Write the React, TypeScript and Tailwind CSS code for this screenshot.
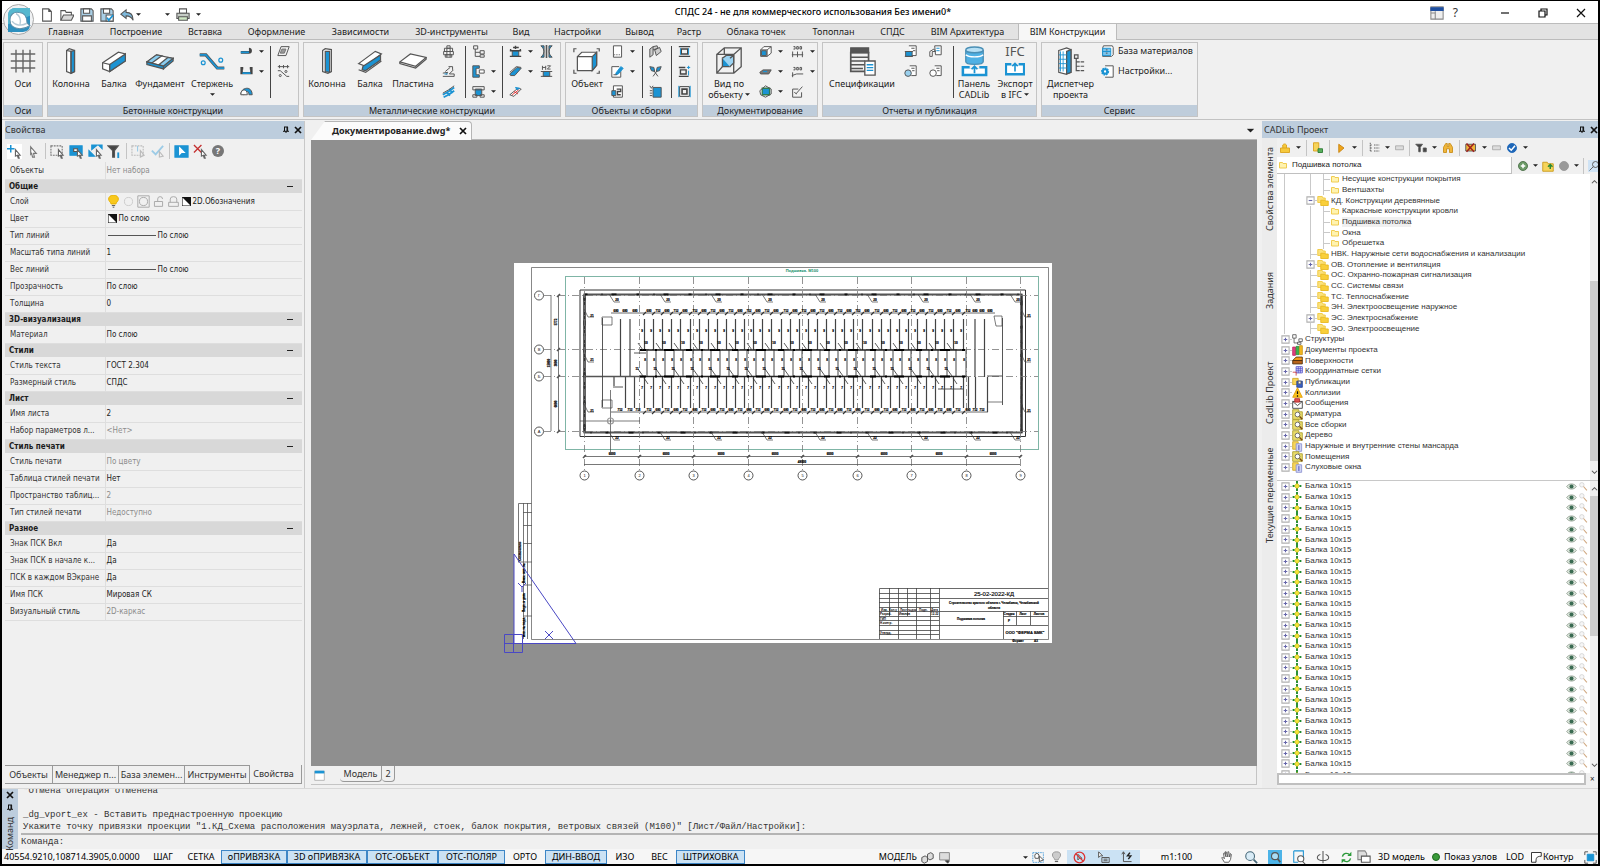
import React from "react";

const BLUE = "#1b93d3";
const INK = "#555";

type IconProps = { s?: number; children: React.ReactNode; box?: number };

const Ico = ({ s = 13, box = 16, children }: IconProps) => (
  <svg width={s} height={s} viewBox={`0 0 ${box} ${box}`} fill="none" stroke={INK} strokeWidth={box > 20 ? 1.4 : 1.2} className="shrink-0" aria-hidden="true">
    {children}
  </svg>
);

const Caret = ({ className = "" }: { className?: string }) => (
  <svg width="5" height="3" viewBox="0 0 6 3" className={`shrink-0 ${className}`} aria-hidden="true">
    <path d="M0 0h6L3 3z" fill="#222" />
  </svg>
);

const Pin = () => (
  <Ico s={8} box={8}><path d="M2 1h4M2.5 1v4M5 1v4M5.6 1v4M1 5.3h6M4 5v2" stroke="#111" strokeWidth={1} /></Ico>
);
const Cross = () => (
  <Ico s={8} box={8}><path d="M1 1l6 6M7 1L1 7" stroke="#111" strokeWidth={1.7} /></Ico>
);

/* ---------- small ribbon icons ---------- */

const I = {
  hook: <Ico><path d="M1 9h10a2 2 0 0 0 0-4" stroke="#444" strokeWidth={3.4} /><path d="M1 9h10" stroke={BLUE} strokeWidth={2.2} /></Ico>,
  bracket: <Ico><path d="M4 4H2v6h12V4h-2" stroke="#444" strokeWidth={3} /><path d="M3 10h10" stroke={BLUE} strokeWidth={2.2} /></Ico>,
  dome: <Ico><path d="M1 11c1-6 5-7 8-7s6 3 6 8h-4c0-3-1-4-3-4s-3 2-3 4z" fill={BLUE} /><path d="M1 12c0-4 2-6 4-6s4 2 4 6z" fill="#fff" /></Ico>,
  slab: <Ico><path d="M5 2h10l-4 11H1z" /><path d="M6 5h5l-2 5H4z" fill="#999" stroke="#777" /></Ico>,
  rebar: <Ico><path d="M1 2h14M3 0v4M8 0v4M13 0v4M1 7h3l8 7h3" /><circle cx="11" cy="8" r="1.3" /><circle cx="4" cy="13" r="1.3" /></Ico>,
  bolt: <Ico><path d="M6 1h4v3H6zM3 4h10v4H3zM2 8h12v4H2zM4 12h8v3H4zM6 4v11M10 4v11" /></Ico>,
  weld: <Ico><path d="M1 14h14v-3H9l5-5M1 10l6-1-2 3M4 8L10 3M8 2h5v4" /><path d="M3 11h4" stroke={BLUE} /></Ico>,
  link: <Ico><path d="M1 12L8 8l7-5M2 15l6-3 7-5M5 9l5 4M9 5l4 5" stroke={BLUE} strokeWidth={2.2} /><path d="M1 10l7-4 7-5" /></Ico>,
  tree: <Ico><path d="M2 1h5v4H2zM4 5v9h6M4 9h6M10 7h5v4h-5zM10 12h5v3h-5z" /></Ico>,
  channel: <Ico><path d="M1 1h8v3H5v8h4v3H1z" fill={BLUE} /><path d="M9 6h6v4H9z" fill="#fff" /></Ico>,
  plateBeam: <Ico><path d="M4 5h8v8H4z" fill={BLUE} /><path d="M1 2h14v4H1zM1 12h5v3H1zM10 12h5v3h-5z" /></Ico>,
  support: <Ico><path d="M4 7h8v7H4z" fill={BLUE} /><path d="M1 7h14M1 14h14M5 3h7M2 7v-2M14 7v-2M8 1v4" stroke="#444" strokeWidth={1.7} /></Ico>,
  beamS: <Ico><path d="M1 11L10 3l5 1-8 9H2z" fill={BLUE} /><path d="M1 9l8-7 6 1" /></Ico>,
  beamRed: <Ico><path d="M1 12L11 4l4 1-9 9z" fill="#fff" /><path d="M8 3l5 1-3 2z" fill={BLUE} stroke={BLUE} /><path d="M4 12l8-6M6 8l5 3" stroke="#e03030" /></Ico>,
  twin: <Ico><path d="M1 1c5 4 5 10 0 14h4V1zM15 1c-5 4-5 10 0 14h-4V1z" fill={BLUE} /><path d="M8 0v16" strokeWidth={2} /></Ico>,
  h2: <Ico><path d="M4 8h8v6H4z" fill={BLUE} /><path d="M1 8h14M1 14h14M3 1v5M7 1v5M3 3h4M9 1h4L9 5h4" /></Ico>,
  page: <Ico><path d="M3 1h10v14H3z" fill="#fff" /><path d="M4 12h8" strokeDasharray="1 1" /></Ico>,
  edit: <Ico><path d="M12 6v9H1V2h9" fill="#fff" /><path d="M6 10l6-8 3 2-6 7-3 1z" fill={BLUE} stroke={BLUE} /><path d="M3 12h4" /></Ico>,
  copyBlock: <Ico><path d="M3 1h11v14H3z" fill="#fff" /><path d="M1 7h5v6H1z" fill={BLUE} /><path d="M7 5h5v3H8v4h4" stroke="#444" strokeWidth={1.6} /></Ico>,
  boxes: <Ico><path d="M1 5l4-3v10l-4 3zM5 2l5-1 1 3-6 2M7 6l6-3 2 5-6 5z" fill="#ccc" /></Ico>,
  scissors: <Ico><path d="M1 2l5 1 1 5-4-1zM15 2l-5 1-1 5 4-1z" fill={BLUE} /><path d="M6 7l5 7M10 7l-5 7" /></Ico>,
  book: <Ico><path d="M5 3h10v12H5z" fill={BLUE} /><path d="M1 1l2 3 2-3M1 7h3M1 10h3M1 13h3" /></Ico>,
  frame1: <Ico><path d="M1 2h14M1 14h14M4 5h8v6H4z" stroke="#444" strokeWidth={1.8} /><path d="M3 4v8M13 4v8" stroke={BLUE} /></Ico>,
  frame2: <Ico><path d="M1 3h8M1 14h12M3 6h7v5H3z" stroke="#444" strokeWidth={1.7} /><path d="M11 3h4M13 1v4M13 7v6" stroke={BLUE} /></Ico>,
  frame3: <Ico><path d="M2 2h12v12H2z" stroke="#444" /><path d="M5 5h6v6H5z" stroke="#444" strokeWidth={2} /><path d="M1 1v14M15 1v14" stroke={BLUE} /></Ico>,
  cube: <Ico><path d="M2 6h8v8H2zM2 6l4-4h9v8l-5 4M10 6l5-4" fill="#fff" /><path d="M3 7h6v6H3z" fill={BLUE} /></Ico>,
  flat: <Ico><path d="M1 9l4-3h10l-3 5H2z" fill="#777" /><path d="M5 8h5" stroke={BLUE} strokeWidth={1.6} /></Ico>,
  cubeGreen: <Ico><path d="M4 4h9v8H4z" fill={BLUE} stroke="#2f7d4f" strokeWidth={1.6} /><path d="M1 7l7-6 7 4v6l-7 4-6-3z" /></Ico>,
  dim1: <Ico><path d="M1 12h14M2 8v7M8 8v7M14 8v7M3 2h2v3H3M7 2h2v3H7zM11 2h2v3h-2z" /></Ico>,
  dim2: <Ico><path d="M1 13l6-2h8M2 9v6M3 3h2v3H3M7 3h2v3H7zM11 3h2v3h-2z" /></Ico>,
  pen: <Ico><path d="M9 5H2v10h11V9M6 11l8-9M4 9l3 2" /></Ico>,
  rep1: <Ico><path d="M6 1h9v12H9" fill="#fff" /><path d="M2 8h8v6H2z" fill={BLUE} /><path d="M1 8h10M1 14h10M9 4h4M11 7h3" /></Ico>,
  rep2: <Ico><path d="M7 1h8v11H8zM1 8l5-3 2 3H4v6H1z" fill="#fff" /><path d="M9 4h4M9 7h4" stroke={BLUE} /></Ico>,
  rep3: <Ico><path d="M7 1h8v12H9" fill="#fff" /><circle cx="5" cy="10" r="4" fill="#9ad0ee" /><path d="M9 4h4M10 7h3" /></Ico>,
  rep4: <Ico><path d="M7 1h8v12H9" fill="#fff" /><circle cx="5" cy="10" r="4" fill="#fff" /><path d="M9 4h4M10 7h3" /></Ico>,
  base: <Ico><path d="M3 1h11l1 2v9l-2 2H2V4z" fill="#fff" /><path d="M2 4h10v9H2zM2 8h10" fill="#7cc4ec" stroke={BLUE} /><path d="M6 6h2M6 10h2" /></Ico>,
  gear: <Ico><path d="M5 1h10v14H5" fill="#fff" /><circle cx="5" cy="8" r="4" fill={BLUE} stroke={BLUE} strokeDasharray="2 1" strokeWidth={2} /><circle cx="5" cy="8" r="1.4" fill="#fff" stroke="none" /></Ico>,
};

/* ---------- large ribbon icons ---------- */

const B = {
  grid: <Ico s={28} box={32}><path d="M8 3v26M16 3v26M24 3v26M2 8h28M2 16h28M2 24h28" stroke="#666" strokeWidth={1.6} /></Ico>,
  column: <Ico s={28} box={32}><path d="M11 4l3-2 6 2v24l-4 2-5-2z" fill="#fff" /><path d="M16 5l4-1v24l-4 2z" fill={BLUE} /><path d="M11 4l5 1v25" /></Ico>,
  steelColumn: <Ico s={28} box={32}><path d="M11 4l3-2 7 1v25l-4 2-6-2z" fill="#fff" /><path d="M14 5h5v24l-5-1z" fill={BLUE} /></Ico>,
  beam: <Ico s={28} box={32}><path d="M3 18L21 6l8 2v8L11 28l-8-3z" fill="#fff" /><path d="M11 20L29 8v8L11 28z" fill={BLUE} /><path d="M3 18l8 2v8" /></Ico>,
  ibeam: <Ico s={28} box={32}><path d="M3 19L22 5l7 3-18 14z" fill="#fff" /><path d="M8 22L28 9v6L11 27l-4-1z" fill={BLUE} /><path d="M3 26l8 3 18-13" /></Ico>,
  found: <Ico s={28} box={32}><path d="M1 17L12 9l19 4-11 9z" fill="#fff" /><path d="M1 17l11-8 6 1-11 8zM15 20l10-8 6 1-11 9z" fill="#8acdf0" /><path d="M1 17v3l19 5v-3z" fill={BLUE} /><path d="M20 25l11-9v-3l-11 9z" fill={BLUE} /></Ico>,
  rod: <Ico s={28} box={32}><path d="M2 9h7l13 15h8" stroke="#555" strokeWidth={3.6} /><path d="M2 9h7l13 15h8" stroke={BLUE} strokeWidth={2} /><circle cx="6" cy="18" r="2.2" stroke={BLUE} /><circle cx="26" cy="15" r="2.2" stroke={BLUE} /></Ico>,
  plate: <Ico s={28} box={32}><path d="M1 17L13 8l18 4-12 10z" fill="#fff" /><path d="M1 17v2l18 5 12-10v-2" /></Ico>,
  object: <Ico s={28} box={32}><path d="M5 11l5-5h17v15l-5 6H5z" fill="#fff" /><path d="M22 11l5-5v15l-5 6z" fill={BLUE} /><path d="M5 11h17M1 6V2h3M27 2h3v3M1 26v4h3M27 30h3v-3" /></Ico>,
  view: <Ico s={30} box={32}><path d="M3 9h18v20H3zM3 9l8-7h18v20l-8 7M21 9l8-7M11 2v7M3 29l6-7" /><path d="M9 13h8v9H9z" fill={BLUE} /><path d="M9 13l4-3h8v8l-4 4M17 13l4-3" fill="#9bd3f2" /></Ico>,
  spec: <Ico s={30} box={32}><path d="M4 2h19v5H4z" fill="#555" /><path d="M4 7h19v20H4zM4 12h19M4 16h15M4 20h15M4 24h13" strokeWidth={1.8} /><path d="M19 16h11v15H19z" fill="#fff" /><path d="M21 20h7M21 23h7M21 26h7" stroke={BLUE} /></Ico>,
  cadlib: <Ico s={31} box={32}><path d="M7 4v12c0 4 18 4 18 0V4" fill="#4fb0e4" stroke="#4a8fb5" /><ellipse cx="16" cy="4" rx="9" ry="3" fill="#b7e0f5" stroke="#4a8fb5" /><path d="M7 9c3 3 15 3 18 0" stroke="#fff" /><path d="M4 22h24v8H4z" fill="#fff" stroke={BLUE} strokeWidth={2.6} /><path d="M11 22h10" stroke="#f0f0f0" strokeWidth={3} /><path d="M16 28v-7m-3 3l3-3 3 3" stroke={BLUE} strokeWidth={1.8} /></Ico>,
  ifc: (
    <span className="flex h-8 w-8 flex-col items-center justify-between">
      <span className="text-[13px] leading-3 text-[#555]">IFC</span>
      <Ico s={20} box={22}><path d="M1 8h20v11H1z" fill="#fff" stroke={BLUE} strokeWidth={2.6} /><path d="M7 8h8" stroke="#f0f0f0" strokeWidth={3} /><path d="M11 16V7m-3 3l3-3 3 3" stroke={BLUE} strokeWidth={1.8} /></Ico>
    </span>
  ),
  manager: <Ico s={28} box={32}><path d="M2 4l9-3 5 2v26l-6 2-8-2z" fill="#fff" /><path d="M11 5l5-2v26l-5 2z" fill={BLUE} /><path d="M4 5v23M7 5v23M2 9h9M2 14h9M2 19h9M2 24h9" stroke={BLUE} strokeWidth={1} /><path d="M20 9h4v4h-4zM22 13v14h4M22 17h4M22 22h4M27 17h4M27 22h4M27 27h4" /></Ico>,
};

type BigProps = { icon: React.ReactNode; label: string; label2?: string; caret?: boolean; caretBelow?: boolean; w: string };

const Big = ({ icon, label, label2, caret, w, caretBelow }: BigProps) => (
  <button type="button" className={`flex flex-col items-center ${w}`}>
    <span className="flex h-[34px] items-center">{icon}</span>
    <span className="whitespace-nowrap leading-[11px]">{label}</span>
    {label2 && (
      <span className="flex items-center gap-[2px] whitespace-nowrap leading-[11px]">{label2}{caret && <Caret />}</span>
    )}
    {caretBelow && <Caret className="mt-1" />}
  </button>
);

const Col = ({ items, carets = false, w = "w-[30px]", skip = 99 }: { items: React.ReactNode[]; carets?: boolean; w?: string; skip?: number }) => (
  <div className={`flex flex-col gap-[6px] ${w}`}>
    {items.map((it, i) => (
      <button type="button" key={i} className="flex h-[14px] items-center gap-[6px]">
        {it}
        {carets && i !== skip && <Caret />}
      </button>
    ))}
  </div>
);

const Rule = () => <div className="mt-[2px] h-[52px] w-px shrink-0 bg-[#444]" />;

const Group = ({ title, w, children }: { title: string; w: string; children: React.ReactNode }) => (
  <section className={`flex shrink-0 flex-col border border-[#c4c4c4] bg-[#f1f1f1] ${w}`}>
    <div className="flex flex-1 items-start pt-[1px]">{children}</div>
    <h2 className="h-[11px] bg-[#bfcddb] text-center leading-[11px]">{title}</h2>
  </section>
);

const ribbonTabs = [
  ["Главная", "w-[60px]"], ["Построение", "w-[80px]"], ["Вставка", "w-[58px]"], ["Оформление", "w-[85px]"],
  ["Зависимости", "w-[83px]"], ["3D-инструменты", "w-[99px]"], ["Вид", "w-[40px]"], ["Настройки", "w-[73px]"],
  ["Вывод", "w-[51px]"], ["Растр", "w-[48px]"], ["Облака точек", "w-[86px]"], ["Топоплан", "w-[69px]"],
  ["СПДС", "w-[49px]"], ["BIM Архитектура", "w-[101px]"], ["BIM Конструкции", "w-[99px]"],
];

const Ribbon = () => (
  <div className="flex h-[80px] gap-1 border-b border-[#c2c2c2] pb-[2px] pl-[1px] pt-[2px]">
    <Group title="Оси" w="w-[40px]"><Big icon={B.grid} label="Оси" w="w-[38px]" /></Group>
    <Group title="Бетонные конструкции" w="w-[252px]">
      <Big icon={B.column} label="Колонна" w="w-[46px]" />
      <Big icon={B.beam} label="Балка" w="w-[40px]" />
      <Big icon={B.found} label="Фундамент" w="w-[52px]" />
      <Big icon={B.rod} label="Стержень" w="w-[52px]" caretBelow />
      <Col items={[I.hook, I.bracket, I.dome]} carets skip={2} w="w-[32px] pl-[2px]" />
      <Rule />
      <Col items={[I.slab, I.rebar]} w="w-[26px] pl-[6px]" />
    </Group>
    <Group title="Металлические конструкции" w="w-[258px]">
      <Big icon={B.steelColumn} label="Колонна" w="w-[46px]" />
      <Big icon={B.ibeam} label="Балка" w="w-[40px]" />
      <Big icon={B.plate} label="Пластина" w="w-[46px]" />
      <Col items={[I.bolt, I.weld, I.link]} w="w-[29px] pl-[6px]" />
      <Rule />
      <Col items={[I.tree, I.channel, I.plateBeam]} carets skip={0} w="w-[36px] pl-[6px]" />
      <Rule />
      <Col items={[I.support, I.beamS, I.beamRed]} carets skip={2} w="w-[37px] pl-[6px]" />
      <Col items={[I.twin, I.h2]} w="w-[20px]" />
    </Group>
    <Group title="Объекты и сборки" w="w-[133px]">
      <Big icon={B.object} label="Объект" w="w-[42px]" />
      <Col items={[I.page, I.edit, I.copyBlock]} carets skip={2} w="w-[34px] pl-[3px]" />
      <Rule />
      <Col items={[I.boxes, I.scissors, I.book]} w="w-[28px] pl-[6px]" />
      <Rule />
      <Col items={[I.frame1, I.frame2, I.frame3]} w="w-[22px] pl-[6px]" />
    </Group>
    <Group title="Документирование" w="w-[116px]">
      <Big icon={B.view} label="Вид по" label2="объекту" caret w="w-[52px]" />
      <Col items={[I.cube, I.flat, I.cubeGreen]} carets w="w-[36px] pl-1" />
      <Col items={[I.dim1, I.dim2, I.pen]} carets skip={2} w="w-[26px]" />
    </Group>
    <Group title="Отчеты и публикация" w="w-[215px]">
      <Big icon={B.spec} label="Спецификации" w="w-[78px]" />
      <Col items={[I.rep1, I.rep3]} w="w-[28px] pl-[3px]" />
      <Col items={[I.rep2, I.rep4]} w="w-[24px]" />
      <Rule />
      <Big icon={B.cadlib} label="Панель" label2="CADLib" w="w-[40px]" />
      <Big icon={B.ifc} label="Экспорт" label2="в IFC" caret w="w-[42px]" />
    </Group>
    <Group title="Сервис" w="w-[157px]">
      <Big icon={B.manager} label="Диспетчер" label2="проекта" w="w-[57px]" />
      <div className="flex flex-col gap-[6px] pl-[2px]">
        <button type="button" className="flex h-[14px] items-center gap-1 whitespace-nowrap">{I.base}База материалов</button>
        <button type="button" className="flex h-[14px] items-center gap-1 whitespace-nowrap">{I.gear}Настройки...</button>
      </div>
    </Group>
  </div>
);

const TitleBar = () => (
  <header className="flex h-[22px] items-center bg-white pl-[38px] pr-3">
    <div className="flex flex-1 items-center gap-[6px] pt-[5px]">
      <Ico s={14}><path d="M3 1h7l3 3v11H3zM10 1v3h3" fill="#fff" /></Ico>
      <Ico s={14}><path d="M1 14V3h5l1 2h6v3" fill="#fff" /><path d="M1 14l3-6h12l-3 6z" fill="#d8d8d8" /></Ico>
      <Ico s={14}><path d="M1 1h12l2 2v12H1z" fill="#a9cfe6" /><path d="M4 1h7v5H4zM3 9h10v6H3z" fill="#fff" /></Ico>
      <Ico s={14}><path d="M1 1h12l2 2v12H1z" fill="#a9cfe6" /><path d="M4 1h7v5H4z" fill="#fff" /><path d="M7 8h8v7H7z" fill="#fff" /><path d="M8 11l2 3 5-6" stroke={BLUE} strokeWidth={2} /></Ico>
      <Ico s={14}><path d="M1 7l6-5v3c6 0 8 3 8 9-2-4-4-5-8-5v3z" fill="#7db9dc" /></Ico>
      <Caret className="-ml-1" />
      <Caret className="ml-[18px]" />
      <Ico s={14}><path d="M4 1h8v5H4z" fill="#fff" /><path d="M1 6h14v6H1z" fill="#c6ccc6" /><path d="M3 10h10v4H3z" fill="#cfe8c4" /></Ico>
      <Caret />
    </div>
    <h1 className="font-medium text-black">СПДС 24 - не для коммерческого использования Без имени0*</h1>
    <div className="flex flex-1 items-center justify-end pt-[1px]">
      <Ico s={14}><path d="M1 1h14v14H1z" fill="#eee" stroke="#888" /><path d="M1 2h14v3H1z" fill="#1f4fa0" stroke="#1f4fa0" /><path d="M6 6v9M1 8h5" stroke="#888" /></Ico>
      <button type="button" className="ml-[9px] text-xs leading-3 text-[#333]" aria-label="Справка">?</button>
      <button type="button" className="ml-[42px]" aria-label="Свернуть"><Ico s={10} box={10}><path d="M1 5h8" stroke="#111" /></Ico></button>
      <button type="button" className="ml-7" aria-label="Развернуть"><Ico s={10} box={10}><path d="M1 3h6v6H1zM3 3V1h6v6H7" stroke="#111" /></Ico></button>
      <button type="button" className="ml-7" aria-label="Закрыть"><Ico s={10} box={10}><path d="M1 1l8 8M9 1L1 9" stroke="#111" /></Ico></button>
    </div>
  </header>
);

/* ---------- properties ---------- */

type Prop = { k: string; v: React.ReactNode; dim?: boolean };

const Swatch = () => (
  <Ico s={9} box={10}><path d="M0 0h10v10H0z" fill="#fff" stroke="#111" /><path d="M0 0h10v10z" fill="#111" stroke="none" /></Ico>
);
const lineValue = (
  <span className="flex items-center gap-[2px] pl-[1px]"><span className="w-12 border-t border-[#555]" />По слою</span>
);

const sections: { title: string; rows: Prop[] }[] = [
  {
    title: "Общие",
    rows: [
      {
        k: "Слой",
        v: (
          <span className="flex items-center gap-[2px]">
            <Ico s={13}><path d="M5 11c0-2-3-3-3-6a6 5 0 0 1 12 0c0 3-3 4-3 6z" fill="#f8c81c" stroke="#e5b000" /><path d="M6 13h4M7 15h2" /></Ico>
            <Ico s={13}><circle cx="8" cy="8" r="5" stroke="#ccc" /></Ico>
            <Ico s={13}><path d="M1 1h14v14H1z" stroke="#aaa" /><circle cx="8" cy="8" r="5" stroke="#aaa" /></Ico>
            <Ico s={13}><path d="M3 8h10v6H3zM7 8V5a3 3 0 0 1 6 0" stroke="#aaa" /></Ico>
            <Ico s={13}><path d="M2 9h12v5H2zM4 9V5a4 3 0 0 1 8 0v4" stroke="#aaa" /></Ico>
            <Swatch />2D.Обозначения
          </span>
        ),
      },
      { k: "Цвет", v: <span className="flex items-center gap-[2px] pl-[1px]"><Swatch />По слою</span> },
      { k: "Тип линий", v: lineValue },
      { k: "Масштаб типа линий", v: "1" },
      { k: "Вес линий", v: lineValue },
      { k: "Прозрачность", v: "По слою" },
      { k: "Толщина", v: "0" },
    ],
  },
  { title: "3D-визуализация", rows: [{ k: "Материал", v: "По слою" }] },
  { title: "Стили", rows: [{ k: "Стиль текста", v: "ГОСТ 2.304" }, { k: "Размерный стиль", v: "СПДС" }] },
  { title: "Лист", rows: [{ k: "Имя листа", v: "2" }, { k: "Набор параметров л...", v: "<Нет>", dim: true }] },
  {
    title: "Стиль печати",
    rows: [
      { k: "Стиль печати", v: "По цвету", dim: true },
      { k: "Таблица стилей печати", v: "Нет" },
      { k: "Пространство таблиц...", v: "2", dim: true },
      { k: "Тип стилей печати", v: "Недоступно", dim: true },
    ],
  },
  {
    title: "Разное",
    rows: [
      { k: "Знак ПСК Вкл", v: "Да" },
      { k: "Знак ПСК в начале к...", v: "Да" },
      { k: "ПСК в каждом ВЭкране", v: "Да" },
      { k: "Имя ПСК", v: "Мировая СК" },
      { k: "Визуальный стиль", v: "2D-каркас", dim: true },
    ],
  },
];

const PropRow = ({ k, v, dim }: Prop) => (
  <tr className="h-[17px] border-b border-[#dedede]">
    <th scope="row" className="whitespace-nowrap border-r border-[#dedede] p-0 pl-[5px] text-left font-normal text-[#333]">{k}</th>
    <td className={dim ? "p-0 pl-[1px] text-[#8c8c8c]" : "p-0 pl-[1px] text-[#222]"}>{v}</td>
  </tr>
);

const arrow = <path d="M9 6l5 6-2 0 1 3-1 0-1-3-2 1z" fill="#fff" stroke="#666" />;
const Sep = () => <span className="h-4 w-px bg-[#c4c4c4]" />;

const Properties = () => (
  <aside className="flex w-[303px] shrink-0 flex-col border-r border-[#c8c8c8] pl-[3px]">
    <div className="flex h-[18px] items-center bg-[#bdcddd] pr-[2px] text-[#333]">
      <h2 className="flex-1">Свойства</h2>
      <button type="button" className="mr-1" aria-label="Закрепить"><Pin /></button>
      <button type="button" aria-label="Закрыть"><Cross /></button>
    </div>
    <div className="flex h-[23px] items-center gap-1 pl-[2px] pt-[1px]">
      <span className="bg-white"><Ico s={15}><path d="M4 1v8M0 5h8" stroke={BLUE} strokeWidth={1.6} />{arrow}</Ico></span>
      <Ico s={15}><path d="M5 3l6 7H8l1 4H7l-1-4-1 1z" fill="#fff" stroke="#777" /></Ico>
      <Sep />
      <Ico s={15}><path d="M1 2h12v10H1z" strokeDasharray="2 1" stroke="#777" />{arrow}</Ico>
      <Ico s={15}><path d="M1 2h13v10H1z" fill={BLUE} stroke={BLUE} /><path d="M5 5h4v3H5z" fill="#fff" />{arrow}</Ico>
      <Ico s={15}><path d="M1 13V7l6 6zM4 1h6L4 6zM11 1l4 4V1z" fill={BLUE} stroke={BLUE} />{arrow}</Ico>
      <Ico s={15}><path d="M1 2h11L8 7v7H6V7z" fill="#444" /><path d="M12 9v6" stroke={BLUE} strokeWidth={2} /></Ico>
      <Sep />
      <Ico s={15}><path d="M1 2h12v10H1z" stroke="#bbb" strokeDasharray="2 1" /><path d="M7 2v6" stroke="#9ccbe6" /><path d="M10 7l4 5-4 2z" stroke="#bbb" /></Ico>
      <Ico s={15}><path d="M2 7l4 4 8-9" stroke="#9ccbe6" strokeWidth={2} /><path d="M10 8l4 5-4 1z" stroke="#bbb" /></Ico>
      <Sep />
      <Ico s={15}><path d="M1 2h14v12H1z" fill={BLUE} stroke={BLUE} /><path d="M6 4l5 5H8l-2 2z" fill="#fff" stroke="#fff" /></Ico>
      <Ico s={15}><path d="M1 1l8 8M9 1L1 9" stroke="#c43030" strokeWidth={1.4} />{arrow}</Ico>
      <span className="flex size-[12px] items-center justify-center rounded-full bg-[#777] text-[9px] font-bold text-white">?</span>
    </div>
    <table className="w-[297px] table-fixed border-collapse font-['DejaVu_Sans_Condensed','DejaVu_Sans',sans-serif] text-[8px] leading-[11px]">
      <colgroup><col className="w-[100px]" /><col /></colgroup>
      <tbody>
        <PropRow k="Объекты" v="Нет набора" dim />
      </tbody>
      {sections.map((s) => (
        <tbody key={s.title}>
          <tr className="h-[14px] bg-[#d8d8d8]">
            <th colSpan={2} scope="rowgroup" className="p-0 pl-1 text-left font-bold text-[#1c1c1c]">
              <span className="flex items-center justify-between pr-[9px]">
                {s.title}
                <button type="button" aria-label={`Свернуть ${s.title}`} className="h-px w-[6px] bg-[#222]" />
              </span>
            </th>
          </tr>
          {s.rows.map((r) => <PropRow key={r.k} {...r} />)}
        </tbody>
      ))}
    </table>
    <div className="flex-1" />
    <nav className="mb-1 mr-[2px] flex h-[19px] text-[#333]">
      {[["Объекты", "w-[48px]"], ["Менеджер п...", "w-[66px]"], ["База элемен...", "w-[66px]"], ["Инструменты", "w-[65px]"]].map(([t, w]) => (
        <button type="button" key={t} className={`overflow-hidden whitespace-nowrap border-b border-r border-t border-[#999] ${w}`}>{t}</button>
      ))}
      <button type="button" className="flex-1 border-b border-r border-[#999] pr-1">Свойства</button>
    </nav>
  </aside>
);

/* ---------- drawing sheet ---------- */

const axesX = [584, 639, 693, 748, 802, 857, 911, 966, 1020];
const axesY = [295, 349, 376, 431];
const joists = Array.from({ length: 36 }, (_, i) => 644 + Math.round(i * 9.1));
const leaders = [609, 660, 711, 762, 815, 867, 918, 970, 1010];

const Sheet = () => (
  <svg viewBox="311 140 946 626" className="h-full w-full" aria-label="Лист 2" fontFamily="'Liberation Sans', sans-serif">
    <rect x="514" y="263" width="538" height="380" fill="#fff" />
    <g fill="none" stroke="#555" strokeWidth="0.7">
      <path d="M531.5 639.5V267.500H1048.500V639.500z" />
      <path d="M580 290H1025.500V436.500H580z" stroke="#333" strokeWidth="1" />
      <path d="M584.500 294.500H1021.500V432.500H584.500z" stroke="#555" strokeWidth="2" />
      <path d="M584.500 294.500H1021.500V432.500H584.500z" stroke="#111" strokeWidth="2" strokeDasharray="3 14 1 9 5 20" />
      <path d="M584.500 294.500V432.500M1021.500 294.500V432.500" stroke="#333" strokeWidth="2.200" />
    </g>
    <rect x="565.500" y="276.500" width="473" height="173" fill="none" stroke="#7fb5a6" />
    <text x="802" y="272" fontSize="4" textAnchor="middle" fill="#0c8a63" fontWeight="bold">Подшивка. М100</text>
    <g stroke="#777" strokeWidth="0.8" strokeDasharray="7 3 1 3">
      {axesX.map((x) => <path key={x} d={`M${x + 0.5} 277V470`} />)}
      {axesY.map((y) => <path key={y} d={`M544 ${y + 0.5}H1038`} />)}
    </g>
    <g fill="#fff" stroke="#444" strokeWidth="0.9">
      {axesX.map((x) => <circle key={x} cx={x + 0.5} cy="475.500" r="4.500" />)}
      {axesY.map((y) => <circle key={y} cx="539" cy={y + 0.5} r="4.500" />)}
    </g>
    <g fontSize="4" textAnchor="middle" fill="#111">
      {axesX.map((x, i) => <text key={x} x={x + 0.5} y="477">{i + 1}</text>)}
      {axesY.map((y, i) => <text key={y} x="539" y={y + 2}>{"ГВБА"[i]}</text>)}
    </g>
    <g stroke="#555" strokeWidth="0.8" fill="none">
      <path d="M584 456.500H1020M584 464.500H1020M551 295V431M558.500 295V431" />
      {axesX.map((x) => <path key={x} d={`M${x - 1} 458l3-3`} strokeWidth="1.600" />)}
      {axesY.map((y) => <path key={y} d={`M557 ${y + 2}l3-3`} strokeWidth="1.600" />)}
    </g>
    <g fontSize="3" fontWeight="bold" textAnchor="middle" fill="#000" stroke="#000" strokeWidth="0.2">
      {axesX.slice(1).map((x) => <text key={x} x={x - 27} y="455">6000</text>)}
      <text x="802" y="463">48000</text>
      <text x="557" y="322" transform="rotate(-90 557 322)">5772</text>
      <text x="557" y="363" transform="rotate(-90 557 363)">3000</text>
      <text x="557" y="404" transform="rotate(-90 557 404)">6000</text>
      <text x="550" y="363" transform="rotate(-90 550 363)">15000</text>
    </g>
    {/* joists */}
    <g stroke="#444" strokeWidth="1.200">
      {joists.map((x) => <path key={x} d={`M${x + 0.5} 319V350M${x + 0.5} 377V408`} />)}
      {joists.map((x) => <path key={x} d={`M${x + 3} 350V377`} stroke="#666" />)}
      <path d="M620.500 319V377M630 319V377M975 319V377M984.500 319V377M614 377V386M625.500 377V408M634.500 377V408M968.500 377V408M975.500 377V408M987.500 377V412" />
      <path d="M611 313H995M611 412H988" strokeWidth="0.800" />
      <path d="M640 350H965M640 376.500H966" stroke="#222" strokeWidth="1.600" />
      <path d="M584 376.500H640" stroke="#555" strokeWidth="1.600" />
      <path d="M640 350H965M640 376.500H965" stroke="#000" strokeWidth="2.200" strokeDasharray="6 9 2 7 10 12" />
      <path d="M602.500 318V407M1002.500 318V405M613 387H623M634 353H646M938 389H964M987 376H1002" strokeWidth="0.900" />
      <path d="M602 317h10v8h-10zM602 400h10v8h-10zM994 316h8v10h-6zM988 402h14M580 421H640M610.500 390V452" fill="none" strokeWidth="0.700" />
      <circle cx="610.500" cy="421" r="3" fill="none" stroke="#999" />
    </g>
    <g stroke="#333" strokeWidth="0.8">
      {joists.map((x, i) => (
        <React.Fragment key={x}>
          <path d={`M${x - 1} 315l3-3M${x - 1} 414l3-3`} strokeWidth="1.200" />
          {i % 2 === 0 && <path d={`M${x - 6} 343l5 7M${x - 6} 369l5 7M${x} 378l4 6`} />}
        </React.Fragment>
      ))}
    </g>
    <g fontSize="3" fontWeight="bold" textAnchor="middle" fill="#000" stroke="#000" strokeWidth="0.2">
      {joists.map((x, i) => (
        <React.Fragment key={x}>
          <text x={x + 5} y="312">{i % 2 ? "712" : "680"}</text>
          <text x={x + 5} y="411">{i % 2 ? "680" : "712"}</text>
          <text x={x - 2} y="332">9</text>
          <text x={x + 1} y="361">8</text>
          <text x={x - 2} y="389">7</text>
          {i % 2 ? <text x={x - 7} y="344">10</text> : <text x={x - 7} y="370">11</text>}
        </React.Fragment>
      ))}
      {[616, 625, 635, 975, 982, 990].map((x) => <text key={x} x={x} y="312">680</text>)}
      {[620, 630, 638, 975, 982].map((x) => <text key={x} x={x} y="411">712</text>)}
      {leaders.map((x) => (
        <React.Fragment key={x}>
          <text x={x + 8} y="301">20</text>
          <text x={x + 8} y="439">22</text>
        </React.Fragment>
      ))}
      {[317, 361, 412].map((y) => <text key={y} x="592" y={y}>21</text>)}
      {[317, 361, 412].map((y) => <text key={y} x="1029" y={y}>21</text>)}
    </g>
    <g stroke="#444" strokeWidth="0.7" fill="none">
      {leaders.map((x) => <path key={x} d={`M${x} 294l5 8h6M${x} 432l5 8h6`} />)}
      <path d="M584 309l4 8h6M584 354l4 8h6M584 404l4 8h6M1021 309l4 8h6M1021 354l4 8h6M1021 404l4 8h6" />
    </g>
    {/* margin stamp */}
    <path d="M518.500 562V503.500H531.500M523.500 503V639M527.500 503V639M523 512.500H532M523 525.500H532M523 543.500H532M518 562H532M523 585H532M523 616H532" stroke="#555" strokeWidth="0.8" fill="none" />
    <g fontSize="3" fontWeight="bold" fill="#000" stroke="#000" strokeWidth="0.2">
      <text x="521" y="561" transform="rotate(-90 521 561)">Согласовано</text>
      <text x="525" y="583" transform="rotate(-90 525 583)">Взам. инв. №</text>
      <text x="525" y="612" transform="rotate(-90 525 612)">Подп. и дата</text>
      <text x="525" y="637" transform="rotate(-90 525 637)">Инв. № подл.</text>
    </g>
    {/* title block */}
    <g stroke="#444" strokeWidth="0.8" fill="none">
      <path d="M879.500 639V588.500H1048M939.500 588V639M889.500 588V616M898.500 588V639M907.500 588V616M916.500 588V639M930.500 588V639" />
      <path d="M879 593.500H939M879 598.500H1048M879 602.500H939M879 607.500H939M879 611.500H1048M879 616.500H939M1003 616.500H1048M879 620.500H939M879 625.500H1048M879 630.500H939M879 634.500H939M1003.500 611V639M1016.500 611V625M1030.500 611V625" />
    </g>
    <g fill="#111" textAnchor="middle" fontSize="3" fontWeight="bold" stroke="#111" strokeWidth="0.2">
      <text x="994" y="596" fontSize="6" fontWeight="normal">25-02-2022-КД</text>
      <text x="994" y="604">Строительство крытого объекта г. Челябинск, Челябинской</text>
      <text x="994" y="609">области</text>
      <text x="971" y="620">Подшивка потолка</text>
      <text x="1009" y="615">Стадия</text>
      <text x="1023" y="615">Лист</text>
      <text x="1039" y="615">Листов</text>
      <text x="1009" y="622">Р</text>
      <text x="1025" y="634" fontSize="4">ООО &quot;ФЕРМА БМК&quot;</text>
      <text x="1018" y="642">Формат</text>
      <text x="1036" y="642">А3</text>
    </g>
    <g fill="#000" fontSize="3" fontWeight="bold">
      <text x="881" y="611">Изм.</text><text x="889" y="611">Кол.у</text><text x="900" y="611">Лист</text><text x="908" y="611">№док</text><text x="919" y="611">Подп.</text><text x="931" y="611">Дата</text>
      <text x="880" y="615">Разраб.</text><text x="899" y="615">Иванов</text><text x="931" y="615">12.22</text>
      <text x="880" y="620">ГИП</text><text x="880" y="624">Н.контр.</text><text x="880" y="634">Утверд.</text>
    </g>
    <path d="M514 554V643.500H576zM504.500 634.500H522.500V652.500H504.500zM504 643.500H523M513.500 634V653M545 631l8 8M553 631l-8 8M518 583l4 4 4-4M522 587v5" stroke="#4a48c4" fill="none" />
  </svg>
);

const Workspace = () => (
  <main className="flex min-w-0 flex-1 flex-col pl-[6px] pr-[5px]">
    <div className="flex h-[19px] items-stretch">
      <div className="flex items-center gap-[9px] rounded-tr border-r border-t border-[#b5b5b5] bg-[#fbfbfb] pr-1 text-[#222] [clip-path:polygon(14px_0,100%_0,100%_100%,0_100%)]">
        <span className="pl-[21px] font-bold">Документирование.dwg*</span>
        <button type="button" aria-label="Закрыть вкладку"><Cross /></button>
      </div>
      <div className="flex flex-1 items-center justify-end border-b border-[#b5b5b5] pr-1"><Caret className="scale-150" /></div>
    </div>
    <div className="min-h-0 flex-1 bg-[#8f8f8f]"><Sheet /></div>
    <div className="mb-[3px] flex h-[19px] items-start border-b border-r border-[#c4c4c4] pl-[3px]">
      <span className="pt-1"><Ico s={11}><path d="M1 2h14v13H1z" fill="#fff" stroke="#aaa" /><path d="M1 3h14" stroke={BLUE} strokeWidth={4} /></Ico></span>
      <button type="button" className="ml-[15px] h-4 w-[42px] rounded-b-sm border-b border-r border-[#999] text-[#333]">Модель</button>
      <button type="button" className="h-4 w-[13px] rounded-b-sm border-b border-r border-[#999] text-[#333]">2</button>
    </div>
  </main>
);

/* ---------- project tree ---------- */

const Plus = ({ open = false }: { open?: boolean }) => (
  <Ico s={9} box={10}><path d="M1 1h8v8H1z" fill="#fff" stroke="#b0b0b0" /><path d={open ? "M3 5h4" : "M3 5h4M5 3v4"} stroke="#66a" /></Ico>
);
const Folder = () => <Ico s={8}><path d="M1 3h6l1 2h7v9H1z" fill="#fff3b0" stroke="#f0cc50" strokeWidth={2} /></Ico>;
const Folders = () => (
  <Ico s={12}><path d="M1 2h6l1 2h3v6H1z" fill="#fbe27c" stroke="#f0c840" /><path d="M5 7h5l1 1h4v6H5z" fill="#f9cf3a" stroke="#e8b923" /></Ico>
);
const Stem = ({ w }: { w: string }) => <span className={`h-full shrink-0 border-r border-[#c9c9c9] ${w}`} />;
const Dash = ({ w }: { w: string }) => <span className={`shrink-0 border-t border-[#c9c9c9] ${w}`} />;

const look = <Ico s={11}><path d="M1 1h9v3h5v11H1z" fill="#e9dc6a" stroke="#a89a2a" /><circle cx="8" cy="8" r="3.5" fill="#fff" /><path d="M11 11l4 4" stroke="#7a4a10" strokeWidth={2} /></Ico>;
const sheets = <Ico s={11}><path d="M1 1h8v11H1z" fill="#f7d65a" stroke="#cfa520" /><path d="M6 4h8v11H6z" fill="#cfd4f4" stroke="#8a8fd0" /><path d="M10 6v7" stroke="#33a" /></Ico>;

const roots: [string, React.ReactNode][] = [
  ["Структуры", <Ico s={11}><path d="M1 1h5v5H1zM10 7h5v4h-5zM3 6v7h6M8 12h5v3H8z" /></Ico>],
  ["Документы проекта", <Ico s={11}><path d="M1 3h4v12H1z" fill="#e04080" stroke="#c02060" /><path d="M6 2h4v12H6z" fill="#3cb44b" stroke="#2a8a38" /><path d="M11 1h4v13h-4z" fill="#f5b921" stroke="#c89010" /></Ico>],
  ["Поверхности", <Ico s={11}><path d="M1 8l5-5h9v5z" fill="#f59a1c" stroke="#4a2a08" /><path d="M1 8h14v5H1z" fill="#b8641a" stroke="#4a2a08" /></Ico>],
  ["Координатные сетки", <Ico s={11}><path d="M6 1h9v9H6zM9 1v9M12 1v9M6 4h9M6 7h9" stroke="#4747c8" /><path d="M1 9h5v5" stroke="#c33" /></Ico>],
  ["Публикации", <Ico s={11}><path d="M1 2h8v9H1z" fill="#f7d65a" stroke="#cfa520" /><path d="M7 6h8v9H7z" fill="#3a62c8" stroke="#223f8a" /><path d="M9 6h4v4H9z" fill="#fff" /></Ico>],
  ["Коллизии", <Ico s={11}><path d="M8 1l7 14H1z" fill="#fbc31c" stroke="#e09a00" /><path d="M8 6v4M8 12v2" stroke="#111" strokeWidth={1.8} /></Ico>],
  ["Сообщения", <Ico s={11}><path d="M1 5h14v10H1zM1 5l7 6 7-6" fill="#fff" stroke="#333" /><path d="M4 1h7v5H4z" fill="#e05252" stroke="#a22" /></Ico>],
  ["Арматура", look],
  ["Все сборки", look],
  ["Дерево", look],
  ["Наружные и внутренние стены мансарда", sheets],
  ["Помещения", look],
  ["Слуховые окна", sheets],
];

const Leaf = ({ t, sel = false }: { t: string; sel?: boolean }) => (
  <li className="flex min-h-0 flex-1 items-center whitespace-nowrap">
    <Stem w="w-[8px]" /><Stem w="w-[26px]" /><Stem w="w-[13px]" /><Dash w="w-[6px]" />
    <span className="flex w-[12px] justify-start pl-[1px]"><Folder /></span>
    <span className={sel ? "bg-[#f0f0f0] leading-[10px]" : "leading-[10px]"}>{t}</span>
  </li>
);
const Branch = ({ t, mark }: { t: string; mark?: "open" | "closed" }) => (
  <li className="flex min-h-0 flex-1 items-center whitespace-nowrap">
    <Stem w="w-[8px]" />
    {mark ? <span className="flex w-[30px] justify-end"><Plus open={mark === "open"} /></span> : <><Stem w="w-[26px]" /><Dash w="w-[4px]" /></>}
    <Dash w="w-[2px]" />
    <span className="flex w-[14px]"><Folders /></span>
    <span className="leading-[10px]">{t}</span>
  </li>
);

const Eye = () => (
  <Ico s={11}><path d="M1 8c3-5 11-5 14 0-3 5-11 5-14 0z" fill="#dfe8df" stroke="#8a9a8a" /><circle cx="8" cy="8" r="3" fill="#3b6b52" stroke="none" /></Ico>
);
const Lens = () => (
  <Ico s={9}><circle cx="5" cy="5" r="4" stroke="#ccc" fill="#f6f6f6" /><path d="M8 8l6 7" stroke="#d0a880" strokeWidth={2} /></Ico>
);
const BeamRow = ({ className }: { className: string }) => (
  <li className={`flex items-center whitespace-nowrap pl-1 ${className}`}>
    <Plus /><Dash w="w-[2px]" />
    <span className="flex w-[13px]">
      <Ico s={10}><path d="M8 3l4 5-4 5-4-5z" fill="#f5e53a" stroke="#c8b614" /><path d="M8 0v4M8 12v4M1 8h3M12 8h3" stroke="#1e8a2e" strokeWidth={3} /></Ico>
    </span>
    <span className="flex-1 leading-[10px]">Балка 10х15</span>
    <Eye /><span className="w-[2px]" /><Lens /><span className="w-[2px]" />
  </li>
);

const ScrollBar = ({ thumb }: { thumb: string }) => (
  <div className="flex w-2 shrink-0 flex-col items-center bg-[#f0f0f0] py-1">
    <Ico s={7} box={8}><path d="M1 6l3-3 3 3" /></Ico>
    <div className={`w-full bg-[#cdcdcd] ${thumb}`} />
    <span className="flex-1" />
    <Ico s={7} box={8}><path d="M1 2l3 3 3-3" /></Ico>
  </div>
);

const Project = () => (
  <aside className="flex w-[336px] shrink-0 flex-col">
    <div className="flex h-[17px] items-center bg-[#bdcddd] pl-[2px] text-[#333]">
      <h2 className="flex-1">CADLib Проект</h2>
      <button type="button" className="mr-1" aria-label="Закрепить"><Pin /></button>
      <button type="button" aria-label="Закрыть"><Cross /></button>
    </div>
    <div className="flex min-h-0 flex-1">
      <nav className="flex w-[15px] shrink-0 flex-col bg-[#ececec] text-[#333]">
        {["Свойства элемента", "Задания", "CadLib Проект", "Текущие переменные"].map((t) => (
          <button type="button" key={t} className="flex h-[102px] rotate-180 items-center justify-center whitespace-nowrap leading-[15px] [writing-mode:vertical-rl]">{t}</button>
        ))}
      </nav>
      <div className="flex min-w-0 flex-1 flex-col">
        <div className="flex h-[19px] items-center gap-[5px] pl-[2px]">
          <Ico s={12}><path d="M2 8h12v6H2zM5 8V4a3 3 0 0 1 5 0v4" fill="#f6c93c" stroke="#d9a21c" /></Ico><Caret /><Sep />
          <Ico s={12}><path d="M2 1h7v11H2z" fill="#f6d45a" stroke="#d9a21c" /><path d="M8 9h6v5H8z" fill="#58b05c" stroke="#2d7a34" /></Ico><Sep />
          <Ico s={12}><path d="M5 3l7 5-7 6z" fill="#eea41c" stroke="#c98410" /></Ico><Caret /><Sep />
          <Ico s={12}><path d="M3 1v12M3 4h3M3 8h3M3 12h3M8 4h7M8 8h7M8 12h7" strokeDasharray="2 1" /></Ico><Caret />
          <Ico s={9}><path d="M1 5h14v7H1z" fill="#ddd" stroke="#999" /></Ico><Sep />
          <Ico s={12}><path d="M1 3h9L7 7v6H5V7z" fill="#444" /><path d="M11 8h4v5h-4z" fill="#444" /></Ico><Caret />
          <Ico s={12}><path d="M2 14V7l3-5h2v4h2V2h2l3 5v7h-4V9H6v5z" fill="#f0b63a" stroke="#c98f1c" /></Ico><Sep />
          <Ico s={12}><path d="M1 3h13v9H1z" fill="#f0b63a" /><path d="M2 2l10 11M12 2L2 13" stroke="#a02020" strokeWidth={2} /></Ico><Caret />
          <Ico s={9}><path d="M1 5h14v7H1z" fill="#ddd" stroke="#999" /></Ico>
          <Ico s={12}><circle cx="8" cy="8" r="6" fill="#1d66b8" stroke="#1d66b8" /><path d="M4 8l3 3 5-6" stroke="#fff" strokeWidth={2} /></Ico><Caret />
        </div>
        <div className="flex h-[17px] items-center overflow-hidden">
          <label className="flex h-full w-[235px] shrink-0 items-center gap-[5px] border-b border-r border-[#c0c0c0] bg-white pl-[2px]">
            <Folder />
            <input aria-label="Путь" defaultValue="Подшивка потолка" className="w-full bg-transparent font-['Liberation_Sans',Arial,sans-serif] text-[8px] text-[#222] outline-none" />
          </label>
          <div className="ml-[5px] flex shrink-0 items-center gap-[4px]">
            <Ico s={12}><circle cx="8" cy="8" r="6" fill="#6b9a66" stroke="#4c6f48" /><path d="M5 8h6M8 5v6" stroke="#fff" strokeWidth={2} /></Ico><Caret />
            <Ico s={12}><path d="M1 3h6l1 2h7v10H1z" fill="#f6d45a" stroke="#c99a1c" /><path d="M11 12V6m-3 3l3-3 3 3" stroke="#2d8a34" strokeWidth={2} /></Ico>
            <Ico s={12}><circle cx="8" cy="8" r="6" fill="#999" stroke="#999" /></Ico><Caret /><Sep />
            <span className="bg-[#cfe3f5]"><Ico s={12}><circle cx="10" cy="6" r="4" /><path d="M7 9l-5 5" /></Ico></span>
          </div>
        </div>
        <div className="flex h-[306px] bg-white">
          <ul className="flex h-[299px] min-w-0 flex-1 flex-col font-['Liberation_Sans',Arial,sans-serif] text-[8px] text-[#333]">
            <Leaf t="Несущие конструкции покрытия" />
            <Leaf t="Вентшахты" />
            <Branch t="КД. Конструкции деревянные" mark="open" />
            <Leaf t="Каркасные конструкции кровли" />
            <Leaf t="Подшивка потолка" sel />
            <Leaf t="Окна" />
            <Leaf t="Обрешетка" />
            <Branch t="НВК. Наружные сети водоснабжения и канализации" />
            <Branch t="ОВ. Отопление и вентиляция" mark="closed" />
            <Branch t="ОС. Охранно-пожарная сигнализация" />
            <Branch t="СС. Системы связи" />
            <Branch t="ТС. Теплоснабжение" />
            <Branch t="ЭН. Электроосвещение наружное" />
            <Branch t="ЭС. Электроснабжение" mark="closed" />
            <Branch t="ЭО. Электроосвещение" />
            {roots.map(([t, icon]) => (
              <li key={t} className="flex min-h-0 flex-1 items-center whitespace-nowrap pl-1">
                <Plus /><Dash w="w-[2px]" /><span className="flex w-[13px]">{icon}</span><span className="leading-[10px]">{t}</span>
              </li>
            ))}
          </ul>
          <ScrollBar thumb="mt-24 h-[180px]" />
        </div>
        <div className="flex min-h-0 flex-1 overflow-hidden border-t border-[#c8c8c8] bg-white">
          <ul className="min-w-0 flex-1 overflow-hidden font-['Liberation_Sans',Arial,sans-serif] text-[8px] text-[#333]">
            <li>
              <ul className="flex h-[288px] flex-col">
                {Array.from({ length: 27 }, (_, i) => <BeamRow key={i} className="min-h-0 flex-1" />)}
              </ul>
            </li>
            <BeamRow className="h-[11px]" />
          </ul>
          <ScrollBar thumb="mt-1 h-[140px]" />
        </div>
        <div className="mb-[3px] flex h-[12px] items-center gap-1">
          <input aria-label="Поиск" className="h-full min-w-0 flex-1 border-2 border-[#c0c0c0] bg-white" />
          <span className="h-2 w-2 text-[8px] leading-2">×</span>
        </div>
      </div>
    </div>
  </aside>
);

/* ---------- command line & status bar ---------- */

const Command = () => (
  <section className="flex h-[61px] border-t border-[#d8d8d8]">
    <div className="flex w-[16px] shrink-0 flex-col items-center gap-[5px] bg-[#bdcddd] pt-[2px]">
      <Cross /><Pin />
      <span className="rotate-180 leading-3 text-[#333] [writing-mode:vertical-rl]">Команд</span>
    </div>
    <div className="flex min-w-0 flex-1 flex-col pl-[3px] font-['Liberation_Mono',monospace] text-[#333]">
      <div className="flex h-[46px] flex-col justify-end overflow-hidden border-b-2 border-[#b4b4b4] pl-[2px]">
        <p className="leading-3">*Отмена Операция отменена</p>
        <p className="h-3 shrink-0" />
        <p className="leading-3">_dg_vport_ex - Вставить преднастроенную проекцию</p>
        <p className="whitespace-nowrap leading-3">Укажите точку привязки проекции "1.КД_Схема расположения мауэрлата, лежней, стоек, балок покрытия, ветровых связей (М100)" [Лист/Файл/Настройки]:</p>
      </div>
      <label className="flex flex-1 items-center">
        Команда:<input className="ml-1 flex-1 bg-transparent outline-none" />
      </label>
    </div>
  </section>
);

const modes: [string, string, boolean][] = [
  ["ШАГ", "w-[36px]", false], ["СЕТКА", "w-[40px]", false], ["оПРИВЯЗКА", "w-[66px]", true], ["3D оПРИВЯЗКА", "w-[80px]", true],
  ["ОТС-ОБЪЕКТ", "w-[71px]", true], ["ОТС-ПОЛЯР", "w-[67px]", true], ["ОРТО", "w-[40px]", false], ["ДИН-ВВОД", "w-[62px]", true],
  ["ИЗО", "w-[36px]", false], ["ВЕС", "w-[33px]", false], ["ШТРИХОВКА", "w-[69px]", true],
];

const Status = () => (
  <footer className="flex h-[15px] items-stretch bg-[#f6f6f6] pt-[1px] text-black">
    <span className="flex w-[143px] items-center whitespace-nowrap pl-[2px]">40554.9210,108714.3905,0.0000</span>
    {modes.map(([t, w, on]) => (
      <button type="button" key={t} aria-pressed={on} className={`whitespace-nowrap border leading-3 ${w} ${on ? "border-[#3d86c6] bg-[#cbe2f4]" : "border-transparent"}`}>{t}</button>
    ))}
    <div className="flex flex-1 items-center justify-end gap-1 whitespace-nowrap">
      <span>МОДЕЛЬ</span>
      <Ico s={13}><path d="M1 8l4-2 3 2v5l-4 2-3-2zM8 4l4-2 3 2v5l-4 2-3-2z" fill="#ddd" /></Ico>
      <Ico s={13}><path d="M2 2h12v9H2z" fill="#ddd" stroke="#888" /><path d="M9 12h5l-2 3z" fill="#333" /></Ico>
    </div>
    <div className="flex w-[189px] items-center justify-end">
      <Caret />
      <span className="mx-1 flex gap-[5px]">
        <Ico s={13}><path d="M1 2h13v12H1z" stroke="#5aa5dc" strokeDasharray="2 1" /><path d="M4 9c-1-2-1-6 2-6s3 4 2 6zM9 6l5 5-5 2z" fill="#fff" /></Ico>
        <Ico s={13}><path d="M6 11c0-2-3-3-3-6a5 4 0 0 1 10 0c0 3-3 4-3 6z" fill="#ccc" stroke="#999" /><path d="M6 13h4" /></Ico>
      </span>
      <span className="flex h-[14px] w-[73px] items-center justify-around bg-[#cbe2f4]">
        <Ico s={13}><path d="M6 4l5 5H8l-2 2z" /><circle cx="8" cy="8" r="6.5" stroke="#d33" strokeWidth={1.6} /><path d="M3.500 3.500l9 9" stroke="#d33" strokeWidth={1.6} /></Ico>
        <Ico s={13}><path d="M2 1l5 5H4l-2 2z" fill="#fff" /><path d="M6 8h9v6H6zM8 10h5M8 12h5" /></Ico>
        <Ico s={13}><path d="M3 1v12h10M3 1L1 4M3 1l2 3" /><path d="M11 2l-3 4h4l-3 4" stroke="#222" strokeWidth={1.8} /></Ico>
      </span>
    </div>
    <span className="w-[73px] self-center text-center">m1:100</span>
    <div className="flex shrink-0 items-center gap-[10px] pl-[7px]">
      <Ico s={14}><path d="M5 14L2 9l1-1 2 2-1-6 1-1 2 5-1-6h1l2 6V2h1l1 6 1-4 1 1-1 6-2 3z" fill="#fff" strokeWidth={1} /></Ico>
      <Ico s={14}><circle cx="7" cy="7" r="5" fill="#d9ecf7" stroke="#467" /><path d="M11 11l4 4" stroke="#467" strokeWidth={2} /></Ico>
      <span className="bg-[#4db4e8]"><Ico s={14}><circle cx="8" cy="7" r="4" fill="#a9dcf5" /><path d="M11 10l3 4" strokeWidth={2} /></Ico></span>
      <Ico s={14}><path d="M2 1h11v8M2 1v13h5" stroke={BLUE} /><circle cx="10" cy="10" r="3.5" fill="#fff" /><path d="M12 13l3 3" /></Ico>
      <Ico s={14}><path d="M8 1v14M5 5C0 7 0 12 8 12s8-5 3-7" /></Ico>
      <Ico s={13}><path d="M3 7a5 5 0 0 1 9-2M13 9a5 5 0 0 1-9 2" stroke="#2c9a3a" strokeWidth={1.7} /><path d="M9 6h5V1zM7 10H2v5z" fill="#2c9a3a" stroke="none" /></Ico>
    </div>
    <div className="flex shrink-0 items-center whitespace-nowrap pl-1 pr-[1px]">
      <Ico s={14}><path d="M1 1h8l2 3v7H1z" fill="#ddd" stroke="#888" /><path d="M5 7h10v7H5z" fill="#fff" /></Ico>
      <span className="ml-[7px] w-[54px]">3D модель</span>
      <span className="size-2 rounded-full border border-[#1f6a1f] bg-[#3a9a3a]" />
      <span className="ml-1 w-[62px]">Показ узлов</span>
      <span className="w-[24px]">LOD</span>
      <Ico s={12}><path d="M2 15V2h13v5c-7 0-7 3-7 8z" fill="#fff" stroke="#222" /></Ico>
      <span className="ml-[1px] w-[41px]">Контур</span>
      <Ico s={13}><path d="M4 4h8v8H4z" fill={BLUE} stroke={BLUE} /><path d="M1 5V1h4M11 1h4v4M15 11v4h-4M5 15H1v-4" /></Ico>
    </div>
  </footer>
);

const Logo = () => (
  <div className="absolute left-[1px] top-[3px] flex size-[31px] items-center justify-center rounded-full border border-[#aaa] bg-[#f0f2f4]">
    <svg width="24" height="26" viewBox="0 0 24 24" aria-hidden="true" preserveAspectRatio="none">
      <path d="M1 8Q1 1 9 1H23V16Q23 23 16 23H1z" fill="#2c8fbe" />
      <path d="M1 16V8Q1 1 9 1H23V8z" fill="#56b8cf" />
      <path d="M3 12c0-5 4-8 9-7 5 0 8 4 8 10l3 2c-3 2-7 3-10 3-6 0-10-3-10-8z" fill="#fff" stroke="#5b8ea8" strokeWidth="1" />
      <path d="M5 13c3 4 9 5 15 2M9 6c4 2 5 6 4 10" fill="none" stroke="#b4cad6" strokeWidth="1.3" />
    </svg>
  </div>
);

export default function App() {
  return (
    <div className="relative flex h-screen flex-col overflow-hidden border-x-2 border-b-2 border-t border-black bg-[#f0f0f0] font-['Noto_Sans','Open_Sans',sans-serif] text-[9px] leading-3 text-[#1c1c1c]">
      <TitleBar />
      <nav className="flex h-[17px] items-stretch border-b border-t border-[#bcbcbc] bg-[#e3e3e3] pl-[34px]">
        {ribbonTabs.map(([t, w], i) => (
          <button type="button" key={t} className={`whitespace-nowrap ${w} ${i === 14 ? "-mb-px border-x border-[#bcbcbc] bg-[#f7f7f7]" : ""}`}>{t}</button>
        ))}
      </nav>
      <Logo />
      <Ribbon />
      <div className="mt-[1px] flex min-h-0 flex-1">
        <Properties />
        <Workspace />
        <Project />
      </div>
      <Command />
      <Status />
    </div>
  );
}
